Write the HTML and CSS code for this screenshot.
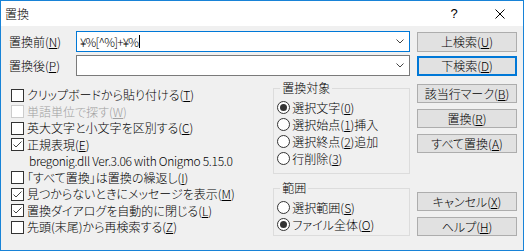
FILE: index.html
```html
<!DOCTYPE html>
<html lang="ja">
<head>
    <meta charset="UTF-8">
    <title>置換</title>
    <link rel="stylesheet" href="styles.css">
</head>
<body>
    <div class="dialog">
        <div class="titlebar">
            <span class="title">置換</span>
            <span class="caption-btn">?</span>
            <span class="caption-btn">
                <svg width="10" height="10" viewBox="0 0 10 10"><path d="M0.5 0.5L9.5 9.5M9.5 0.5L0.5 9.5" stroke="#000" stroke-width="1"/></svg>
            </span>
        </div>

        <div class="content">
            <div class="field-row">
                <label class="field-label">置換前(<u>N</u>)</label>
                <div class="combo focused">
                    <span class="combo-text">¥%[^%]+¥%</span><span class="caret"></span>
                    <svg class="chevron" width="8" height="5" viewBox="0 0 8 5"><path d="M0.5 0.5L4 4L7.5 0.5" fill="none" stroke="#444"/></svg>
                </div>
                <button class="btn">上検索(<u>U</u>)</button>
            </div>
            <div class="field-row">
                <label class="field-label">置換後(<u>P</u>)</label>
                <div class="combo">
                    <span class="combo-text"></span>
                    <svg class="chevron" width="8" height="5" viewBox="0 0 8 5"><path d="M0.5 0.5L4 4L7.5 0.5" fill="none" stroke="#444"/></svg>
                </div>
                <button class="btn default">下検索(<u>D</u>)</button>
            </div>

            <div class="options">
                <div class="checks">
                    <div class="check-row"><span class="box"></span>クリップボードから貼り付ける(<u>T</u>)</div>
                    <div class="check-row disabled"><span class="box"></span>単語単位で探す(<u>W</u>)</div>
                    <div class="check-row"><span class="box"></span>英大文字と小文字を区別する(<u>C</u>)</div>
                    <div class="check-row"><span class="box checked"><svg width="11" height="11" viewBox="0 0 11 11"><path d="M1.5 5.5L4 8L9.5 2.5" fill="none" stroke="#444"/></svg></span>正規表現(<u>E</u>)</div>
                    <div class="check-row lib-info">bregonig.dll Ver.3.06 with Onigmo 5.15.0</div>
                    <div class="check-row"><span class="box"></span>「すべて置換」は置換の繰返し(<u>I</u>)</div>
                    <div class="check-row"><span class="box checked"><svg width="11" height="11" viewBox="0 0 11 11"><path d="M1.5 5.5L4 8L9.5 2.5" fill="none" stroke="#444"/></svg></span>見つからないときにメッセージを表示(<u>M</u>)</div>
                    <div class="check-row"><span class="box checked"><svg width="11" height="11" viewBox="0 0 11 11"><path d="M1.5 5.5L4 8L9.5 2.5" fill="none" stroke="#444"/></svg></span>置換ダイアログを自動的に閉じる(<u>L</u>)</div>
                    <div class="check-row"><span class="box"></span>先頭(末尾)から再検索する(<u>Z</u>)</div>
                </div>

                <div class="groups">
                    <fieldset class="group target">
                        <legend>置換対象</legend>
                        <div class="radio-row"><span class="radio on"></span>選択文字(<u>0</u>)</div>
                        <div class="radio-row"><span class="radio"></span>選択始点(<u>1</u>)挿入</div>
                        <div class="radio-row"><span class="radio"></span>選択終点(<u>2</u>)追加</div>
                        <div class="radio-row"><span class="radio"></span>行削除(<u>3</u>)</div>
                    </fieldset>
                    <fieldset class="group range">
                        <legend>範囲</legend>
                        <div class="radio-row"><span class="radio"></span>選択範囲(<u>S</u>)</div>
                        <div class="radio-row"><span class="radio on"></span>ファイル全体(<u>O</u>)</div>
                    </fieldset>
                </div>

                <div class="buttons">
                    <button class="btn">該当行マーク(<u>B</u>)</button>
                    <button class="btn">置換(<u>R</u>)</button>
                    <button class="btn">すべて置換(<u>A</u>)</button>
                    <button class="btn cancel">キャンセル(<u>X</u>)</button>
                    <button class="btn">ヘルプ(<u>H</u>)</button>
                </div>
            </div>
        </div>
    </div>
</body>
</html>
```

FILE: styles.css
```css
* {
    box-sizing: border-box;
    margin: 0;
    padding: 0;
}

body {
    font-family: "Noto Sans CJK JP", "Noto Sans", sans-serif;
    font-size: 12px;
    font-weight: 300;
    font-feature-settings: "palt";
    color: #000;
    background-color: #fff;
}

u {
    text-decoration: underline;
    text-underline-offset: 1px;
}

.dialog {
    width: 524px;
    height: 251px;
    border: 1px solid #1883d7;
    background-color: #f0f0f0;
    display: flex;
    flex-direction: column;
}

/* title bar */
.titlebar {
    height: 25px;
    background-color: #fff;
    display: flex;
    align-items: center;
    padding-left: 4px;
}

.title {
    flex: 1;
    line-height: 25px;
}

.caption-btn {
    width: 46px;
    height: 25px;
    display: flex;
    align-items: center;
    justify-content: center;
    font-family: "Liberation Sans", sans-serif;
    font-size: 13px;
}

/* search rows */
.content {
    flex: 1;
    padding: 5px 6px 0 8px;
}

.field-row {
    display: flex;
    align-items: center;
    height: 21px;
    margin-bottom: 3px;
}

.field-label {
    width: 67px;
    line-height: 16px;
}

.combo {
    width: 334px;
    height: 21px;
    margin-right: 7px;
    border: 1px solid #7a7a7a;
    background-color: #fff;
    display: flex;
    align-items: center;
    padding-left: 3px;
}

.combo.focused {
    border-color: #0078d7;
}

.combo-text {
    line-height: 16px;
    letter-spacing: -0.8px;
}

.caret {
    width: 1px;
    height: 13px;
    margin-left: 1px;
    background-color: #000;
}

.chevron {
    margin-left: auto;
    margin-right: 5px;
}

.btn {
    width: 100px;
    height: 20px;
    font-family: inherit;
    font-size: 12px;
    font-weight: 300;
    font-feature-settings: "palt";
    line-height: 16px;
    color: #000;
    background-color: #e1e1e1;
    border: 1px solid #adadad;
}

.btn.default {
    border: 2px solid #0078d7;
}

/* lower area */
.options {
    display: flex;
    margin-top: 4px;
}

.checks {
    width: 265px;
    padding-top: 7px;
    padding-left: 2px;
}

.check-row {
    display: flex;
    align-items: center;
    height: 16.5px;
    line-height: 16px;
    white-space: nowrap;
}

.box {
    width: 13px;
    height: 13px;
    border: 1px solid #333;
    background-color: #fff;
    margin-right: 3px;
    display: flex;
    align-items: center;
    justify-content: center;
}

.check-row.disabled {
    color: #a0a0a0;
}

.check-row.disabled .box {
    border-color: #cccccc;
}

.lib-info {
    padding-left: 18px;
    letter-spacing: -0.3px;
}

.groups {
    width: 137px;
    margin-right: 7px;
}

.group {
    border: 1px solid #dcdcdc;
    padding: 0 0 0 3px;
    margin: 0;
}

.group legend {
    margin-left: 3px;
    padding: 0 2px;
    line-height: 16px;
}

.group.target {
    height: 94px;
}

.group.range {
    height: 56px;
    margin-top: 6px;
}

.radio-row {
    display: flex;
    align-items: center;
    height: 17px;
    line-height: 16px;
    white-space: nowrap;
}

.group .radio-row:first-of-type {
    margin-top: 3px;
}

.radio {
    width: 13px;
    height: 13px;
    border: 1px solid #333;
    border-radius: 50%;
    background-color: #fff;
    margin-right: 2px;
    display: flex;
    align-items: center;
    justify-content: center;
}

.radio.on::after {
    content: "";
    width: 7px;
    height: 7px;
    border-radius: 50%;
    background-color: #333;
}

.buttons {
    display: flex;
    flex-direction: column;
    gap: 6px;
    padding-top: 4px;
}

.buttons .btn {
    height: 19px;
}

.buttons .cancel {
    margin-top: 33px;
}
```
